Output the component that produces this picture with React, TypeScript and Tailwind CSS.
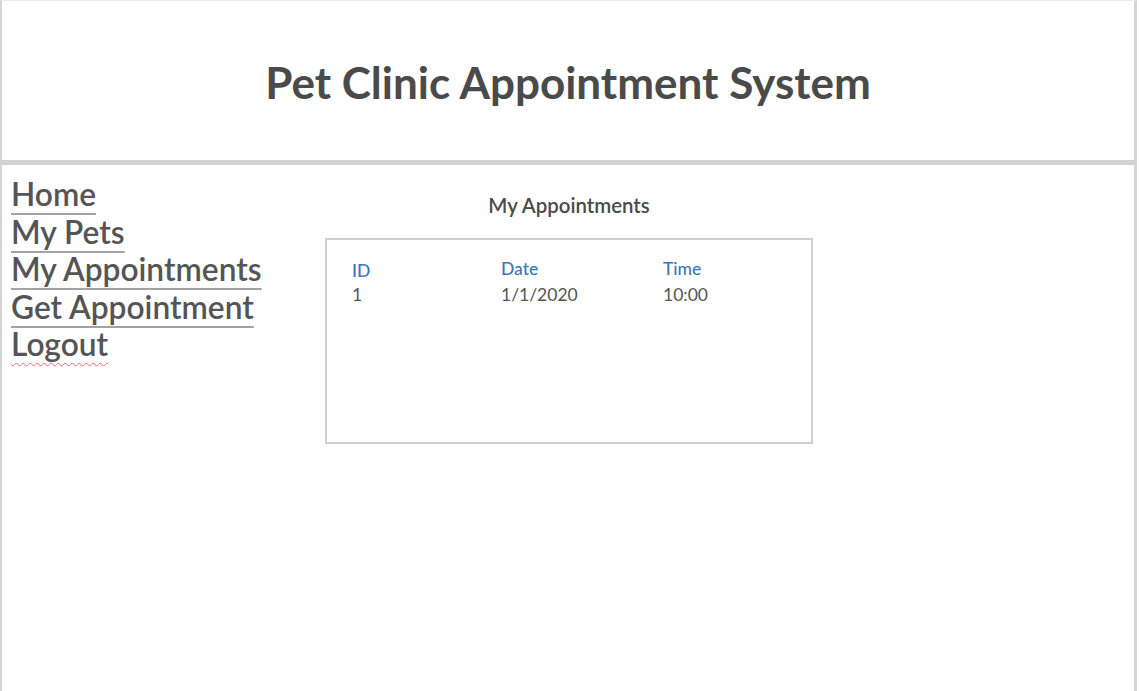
const appointments = [{ id: 1, date: "1/1/2020", time: "10:00" }];

const links = ["Home", "My Pets", "My Appointments", "Get Appointment"];

const App = () => {
  return (
    <div
      className="min-h-[691px] w-[1137px] bg-white border-l-2 border-r-[3px] border-t border-l-[#d4d4d4] border-r-[#d4d4d4] border-t-[#ececec]"
      style={{ fontFamily: "Lato, 'Open Sans', sans-serif" }}
    >
      <header className="h-[159px] flex items-center justify-center">
        <h1 className="text-[44px] font-bold text-[#4a4a4a] leading-none pt-[3px]">
          Pet Clinic Appointment System
        </h1>
      </header>
      <div className="h-[5px] bg-[#d2d2d2]" />
      <div className="flex">
        <nav className="w-[323px] pl-[9px] pt-[11px] flex flex-col items-start">
          {links.map((l) => (
            <a
              key={l}
              href="#"
              className="text-[31.7px] font-semibold leading-[37.5px] text-[#555] underline decoration-2 decoration-[#a3a3a3] underline-offset-[7px]"
            >
              {l}
            </a>
          ))}
          <a
            href="#"
            className="text-[31.7px] font-semibold leading-[37.5px] text-[#555] underline decoration-wavy decoration-1 decoration-[#e26a6a] underline-offset-[6px]"
          >
            Logout
          </a>
        </nav>
        <main className="w-[488px] pt-[28px] flex flex-col items-center">
          <h2 className="text-[20.4px] leading-6 font-semibold text-[#4a4a4a]">
            My Appointments
          </h2>
          <div className="mt-[21px] w-full h-[206px] border-2 border-[#cfcfcf] pl-[25px] pt-[17px]">
            <div className="grid grid-cols-[149px_162px_1fr] text-[17.5px] leading-[24px]">
              <div className="text-[#3b76bd] font-medium pt-[2px]">ID</div>
              <div className="text-[#3b76bd] font-medium">Date</div>
              <div className="text-[#3b76bd] font-medium">Time</div>
              {appointments.map((a) => (
                <>
                  <div key={`i${a.id}`} className="text-[#555]">{a.id}</div>
                  <div key={`d${a.id}`} className="text-[#555]">{a.date}</div>
                  <div key={`t${a.id}`} className="text-[#555]">{a.time}</div>
                </>
              ))}
            </div>
          </div>
        </main>
      </div>
    </div>
  );
};

export default App;
